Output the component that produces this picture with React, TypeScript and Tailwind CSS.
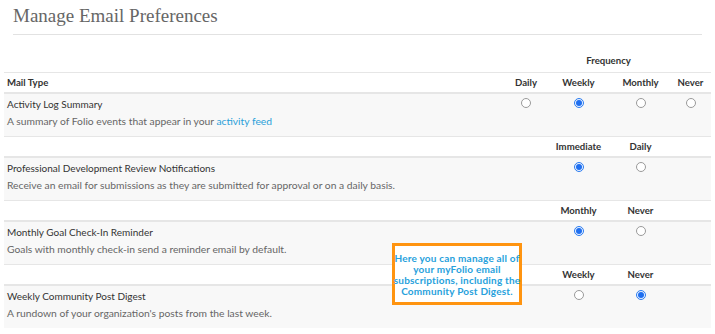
import React from "react";

type Section = {
  labels: [string, string, string, string];
  title: string;
  description: React.ReactNode;
  selected: number;
  options: boolean[];
};

const sections: Section[] = [
  {
    labels: ["Daily", "Weekly", "Monthly", "Never"],
    title: "Activity Log Summary",
    description: (
      <>
        A summary of Folio events that appear in your{" "}
        <a href="#" className="text-[#2a9fd8]">
          activity feed
        </a>
      </>
    ),
    selected: 1,
    options: [true, true, true, true],
  },
  {
    labels: ["", "Immediate", "Daily", ""],
    title: "Professional Development Review Notifications",
    description:
      "Receive an email for submissions as they are submitted for approval or on a daily basis.",
    selected: 1,
    options: [false, true, true, false],
  },
  {
    labels: ["", "Monthly", "Never", ""],
    title: "Monthly Goal Check-In Reminder",
    description: "Goals with monthly check-in send a reminder email by default.",
    selected: 1,
    options: [false, true, true, false],
  },
  {
    labels: ["", "Weekly", "Never", ""],
    title: "Weekly Community Post Digest",
    description: "A rundown of your organization's posts from the last week.",
    selected: 2,
    options: [false, true, true, false],
  },
];

const cols = "grid grid-cols-[1fr_40px_65px_59px_41px]";

const Radio = ({ checked }: { checked: boolean }) =>
  checked ? (
    <span className="flex h-[10px] w-[10px] items-center justify-center rounded-full border border-[#2b7cf0] bg-[#e8f1fe]">
      <span className="h-[6px] w-[6px] rounded-full bg-[#1f6ff0]" />
    </span>
  ) : (
    <span className="block h-[10px] w-[10px] rounded-full border border-[#9a9a9a] bg-white" />
  );

export default function App() {
  return (
    <div
      className="relative h-[334px] w-[715px] overflow-hidden bg-white"
      style={{ fontFamily: "Lato, 'Liberation Sans', sans-serif" }}
    >
      <div className="mx-[13px] w-[689px] border-b border-[#e2e2e2] pt-[4px] pb-[6px]">
        <h1
          className="text-[19px] leading-[24px] text-[#666]"
          style={{ fontFamily: "'Liberation Serif', serif" }}
        >
          Manage Email Preferences
        </h1>
      </div>

      <div className="mx-[4px] mt-[15px] text-[9.6px] text-[#333]">
        <div className={`${cols} h-[22px] items-center pt-[1px] font-bold`}>
          <div />
          <div className="col-span-4 text-center">Frequency</div>
        </div>

        {sections.map((s, i) => (
          <div key={i}>
            <div
              className={`${cols} h-[22px] items-center border-t border-b-2 border-[#e6e6e6] pt-[2px] font-bold`}
            >
              <div className="pl-[3px]">{i === 0 ? "Mail Type" : ""}</div>
              {s.labels.map((l, j) => (
                <div key={j} className="text-center">
                  {l}
                </div>
              ))}
            </div>
            <div className={`${cols} h-[42px] bg-[#f8f8f8]`}>
              <div className="pl-[3px] pt-[3px]">
                <div className="text-[10px] leading-[14px]">{s.title}</div>
                <div className="mt-[3px] text-[10.3px] leading-[14px] text-[#666]">
                  {s.description}
                </div>
              </div>
              {s.options.map((o, j) => (
                <div key={j} className="flex justify-center pt-[4px]">
                  {o && <Radio checked={s.selected === j} />}
                </div>
              ))}
            </div>
          </div>
        ))}
      </div>

      <div className="absolute left-[392px] top-[243px] flex h-[62px] w-[130px] items-center justify-center border-[3px] border-[#ff9410] bg-white">
        <p className="whitespace-nowrap pt-[2px] text-center text-[10px] font-bold leading-[11px] tracking-[0.2px] text-[#27a1dc]">
          Here you can manage all of
          <br />
          your myFolio email
          <br />
          subscriptions, including the
          <br />
          Community Post Digest.
        </p>
      </div>
    </div>
  );
}
